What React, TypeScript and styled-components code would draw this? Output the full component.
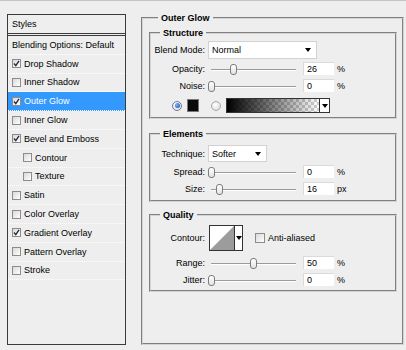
import React from "react";
import styled, { createGlobalStyle } from "styled-components";

const GlobalStyle = createGlobalStyle`
  html, body {
    margin: 0;
    padding: 0;
    background: #eeeeee;
  }
  body {
    font-family: "Liberation Sans", Arial, sans-serif;
    font-size: 9px;
    color: #000;
  }
`;

const Dialog = styled.div`
  width: 406px;
  height: 350px;
  box-sizing: border-box;
  border-top: 1px solid #c4c4c4;
  padding: 11px 0 0 7px;
  display: flex;
  align-items: flex-start;
  gap: 15px;
`;

/* ---------- left styles list ---------- */

const StylesPanel = styled.div`
  width: 119px;
  height: 331px;
  margin-top: 2px;
  box-sizing: border-box;
  border: 1px solid #3a3a3a;
  display: flex;
  flex-direction: column;
`;

const PanelHeader = styled.div`
  height: 18px;
  padding-left: 4px;
  display: flex;
  align-items: center;
  border-bottom: 3px double #3a3a3a;
`;

const StyleRow = styled.div<{ $active?: boolean; $indent?: boolean }>`
  height: 17.8px;
  padding-left: ${(p) => (p.$indent ? 15 : 4)}px;
  display: flex;
  align-items: center;
  gap: 3px;
  border-bottom: 1px dotted #ffffff;
  background: ${(p) => (p.$active ? "#3399ff" : "transparent")};
  color: ${(p) => (p.$active ? "#ffffff" : "#000000")};
  white-space: nowrap;
`;

const Box = styled.span<{ $size?: number }>`
  width: ${(p) => p.$size ?? 9}px;
  height: ${(p) => p.$size ?? 9}px;
  flex: none;
  box-sizing: border-box;
  border: 1px solid #8c8c8c;
  background: linear-gradient(135deg, #d8d8d8, #ffffff);
  display: flex;
  align-items: center;
  justify-content: center;
`;

const Check = ({ on, size }: { on?: boolean; size?: number }) => (
  <Box $size={size}>
    {on && (
      <svg width="7" height="7" viewBox="0 0 7 7">
        <path d="M1 3.5 L2.8 5.6 L6 0.8" fill="none" stroke="#1c2a3c" strokeWidth="1.3" />
      </svg>
    )}
  </Box>
);

/* ---------- right settings ---------- */

const Group = styled.fieldset<{ $mt?: number }>`
  margin: ${(p) => p.$mt ?? 0}px 0 0 0;
  padding: 0;
  min-width: 0;
  border: 2px groove #d4d4d4;
`;

const OuterGroup = styled(Group)`
  width: 263px;
  height: 333px;
  box-sizing: border-box;
  padding: 0 5px 0 6px;
`;

const GroupTitle = styled.legend`
  font-weight: bold;
  font-size: 9px;
  line-height: 12px;
  padding: 0 3px;
  margin-left: 9px;
`;

const Section = styled.div<{ $pb: number }>`
  padding-bottom: ${(p) => p.$pb}px;
`;

const FieldRow = styled.div<{ $mt: number; $h: number }>`
  height: ${(p) => p.$h}px;
  margin-top: ${(p) => p.$mt}px;
  display: flex;
  align-items: center;
`;

const FieldLabel = styled.span`
  width: 54px;
  margin-right: 3px;
  flex: none;
  text-align: right;
  white-space: nowrap;
`;

const Select = styled.div<{ $w: number; $h: number }>`
  width: ${(p) => p.$w}px;
  height: ${(p) => p.$h}px;
  box-sizing: border-box;
  border: 1px solid #d2d2d2;
  background: #ffffff;
  padding: 0 5px 0 3px;
  display: flex;
  align-items: center;
  justify-content: space-between;
`;

const Arrow = styled.span`
  width: 0;
  height: 0;
  border-left: 3.5px solid transparent;
  border-right: 3.5px solid transparent;
  border-top: 4px solid #000;
`;

const SliderArea = styled.div`
  width: 95px;
  height: 100%;
  position: relative;
  flex: none;
`;

const Track = styled.div`
  position: absolute;
  left: 3px;
  top: 50%;
  width: 85px;
  height: 1px;
  background: #9a9a9a;
  border-bottom: 1px solid #ffffff;
`;

const Thumb = styled.div`
  position: absolute;
  top: 50%;
  width: 7px;
  height: 11px;
  margin-top: -5px;
  box-sizing: border-box;
  border: 1px solid #7c7c7c;
  border-radius: 3px 3px 3px 3px;
  background: linear-gradient(#ffffff, #e2e2e2);
`;

const NumBox = styled.div`
  width: 31px;
  height: 13px;
  box-sizing: border-box;
  flex: none;
  background: #ffffff;
  border-top: 1px solid #dadada;
  border-left: 1px solid #dadada;
  padding-left: 3px;
  display: flex;
  align-items: center;
`;

const Unit = styled.span`
  margin-left: 3px;
`;

const ColorRow = styled(FieldRow)`
  padding-left: 21px;
`;

const Radio = styled.span<{ $on?: boolean }>`
  width: 10px;
  height: 10px;
  box-sizing: border-box;
  border-radius: 50%;
  border: 1px solid ${(p) => (p.$on ? "#6a7f99" : "#a8a8a8")};
  background: radial-gradient(circle at 40% 35%, #ffffff, #d6d6d6);
  display: flex;
  align-items: center;
  justify-content: center;
  flex: none;

  &::after {
    content: "";
    width: 5px;
    height: 5px;
    border-radius: 50%;
    background: ${(p) =>
      p.$on ? "radial-gradient(circle at 35% 35%, #7fb4ff, #1747b8)" : "transparent"};
  }
`;

const Swatch = styled.span`
  width: 12px;
  height: 13px;
  margin-left: 5px;
  background: #0a0a0a;
  border: 1px solid #777;
  box-sizing: border-box;
  flex: none;
`;

const GradientPicker = styled.div`
  width: 104px;
  height: 15px;
  margin-left: 5px;
  box-sizing: border-box;
  border: 1px solid #333;
  display: flex;
  flex: none;
`;

const GradientFill = styled.div`
  flex: 1;
  background: linear-gradient(to right, #000 0%, rgba(0, 0, 0, 0) 100%),
    repeating-conic-gradient(#cfcfcf 0 25%, #ffffff 0 50%) 0 0 / 6px 6px;
`;

const PickerButton = styled.div`
  width: 9px;
  border-left: 1px solid #333;
  background: #ffffff;
  display: flex;
  align-items: center;
  justify-content: center;
`;

const ContourPicker = styled.div`
  width: 34px;
  height: 26px;
  margin-left: 1px;
  box-sizing: border-box;
  border: 1px solid #333;
  display: flex;
  flex: none;
  background: #ffffff;
`;

const ContourPreview = styled.div`
  flex: 1;
  display: flex;
`;

const CheckLabel = styled.span`
  margin-left: 12px;
  display: flex;
  align-items: center;
  gap: 3px;
`;

const styleItems: { label: string; on: boolean; indent?: boolean; active?: boolean }[] = [
  { label: "Drop Shadow", on: true },
  { label: "Inner Shadow", on: false },
  { label: "Outer Glow", on: true, active: true },
  { label: "Inner Glow", on: false },
  { label: "Bevel and Emboss", on: true },
  { label: "Contour", on: false, indent: true },
  { label: "Texture", on: false, indent: true },
  { label: "Satin", on: false },
  { label: "Color Overlay", on: false },
  { label: "Gradient Overlay", on: true },
  { label: "Pattern Overlay", on: false },
  { label: "Stroke", on: false },
];

const SliderField = ({
  label,
  value,
  unit,
  pos,
  mt,
}: {
  label: string;
  value: string;
  unit: string;
  pos: number;
  mt: number;
}) => (
  <FieldRow $mt={mt} $h={13}>
    <FieldLabel>{label}</FieldLabel>
    <SliderArea>
      <Track />
      <Thumb style={{ left: 3 + pos * 85 - 3.5 }} />
    </SliderArea>
    <NumBox>{value}</NumBox>
    <Unit>{unit}</Unit>
  </FieldRow>
);

export default function App() {
  return (
    <>
      <GlobalStyle />
      <Dialog>
        <StylesPanel>
          <PanelHeader>Styles</PanelHeader>
          <StyleRow>Blending Options: Default</StyleRow>
          {styleItems.map((s) => (
            <StyleRow key={s.label} $active={s.active} $indent={s.indent}>
              <Check on={s.on} />
              {s.label}
            </StyleRow>
          ))}
        </StylesPanel>

        <OuterGroup>
          <GroupTitle>Outer Glow</GroupTitle>

          <Group $mt={3}>
            <GroupTitle>Structure</GroupTitle>
            <Section $pb={4}>
              <FieldRow $mt={2} $h={18}>
                <FieldLabel>Blend Mode:</FieldLabel>
                <Select $w={109} $h={18}>
                  Normal
                  <Arrow />
                </Select>
              </FieldRow>
              <SliderField label="Opacity:" value="26" unit="%" pos={0.26} mt={3} />
              <SliderField label="Noise:" value="0" unit="%" pos={0} mt={4} />
              <ColorRow $mt={6} $h={15}>
                <Radio $on />
                <Swatch />
                <Radio style={{ marginLeft: 12 }} />
                <GradientPicker>
                  <GradientFill />
                  <PickerButton>
                    <Arrow />
                  </PickerButton>
                </GradientPicker>
              </ColorRow>
            </Section>
          </Group>

          <Group $mt={9}>
            <GroupTitle>Elements</GroupTitle>
            <Section $pb={5}>
              <FieldRow $mt={5} $h={17}>
                <FieldLabel>Technique:</FieldLabel>
                <Select $w={59} $h={17}>
                  Softer
                  <Arrow />
                </Select>
              </FieldRow>
              <SliderField label="Spread:" value="0" unit="%" pos={0} mt={3} />
              <SliderField label="Size:" value="16" unit="px" pos={0.105} mt={4} />
            </Section>
          </Group>

          <Group $mt={7}>
            <GroupTitle>Quality</GroupTitle>
            <Section $pb={4}>
              <FieldRow $mt={4} $h={26}>
                <FieldLabel>Contour:</FieldLabel>
                <ContourPicker>
                  <ContourPreview>
                    <svg width="24" height="24" viewBox="0 0 24 24">
                      <polygon points="0,24 24,0 24,24" fill="#9c9c9c" />
                    </svg>
                  </ContourPreview>
                  <PickerButton>
                    <Arrow />
                  </PickerButton>
                </ContourPicker>
                <CheckLabel>
                  <Check size={10} />
                  Anti-aliased
                </CheckLabel>
              </FieldRow>
              <SliderField label="Range:" value="50" unit="%" pos={0.5} mt={5} />
              <SliderField label="Jitter:" value="0" unit="%" pos={0} mt={4} />
            </Section>
          </Group>
        </OuterGroup>
      </Dialog>
    </>
  );
}
